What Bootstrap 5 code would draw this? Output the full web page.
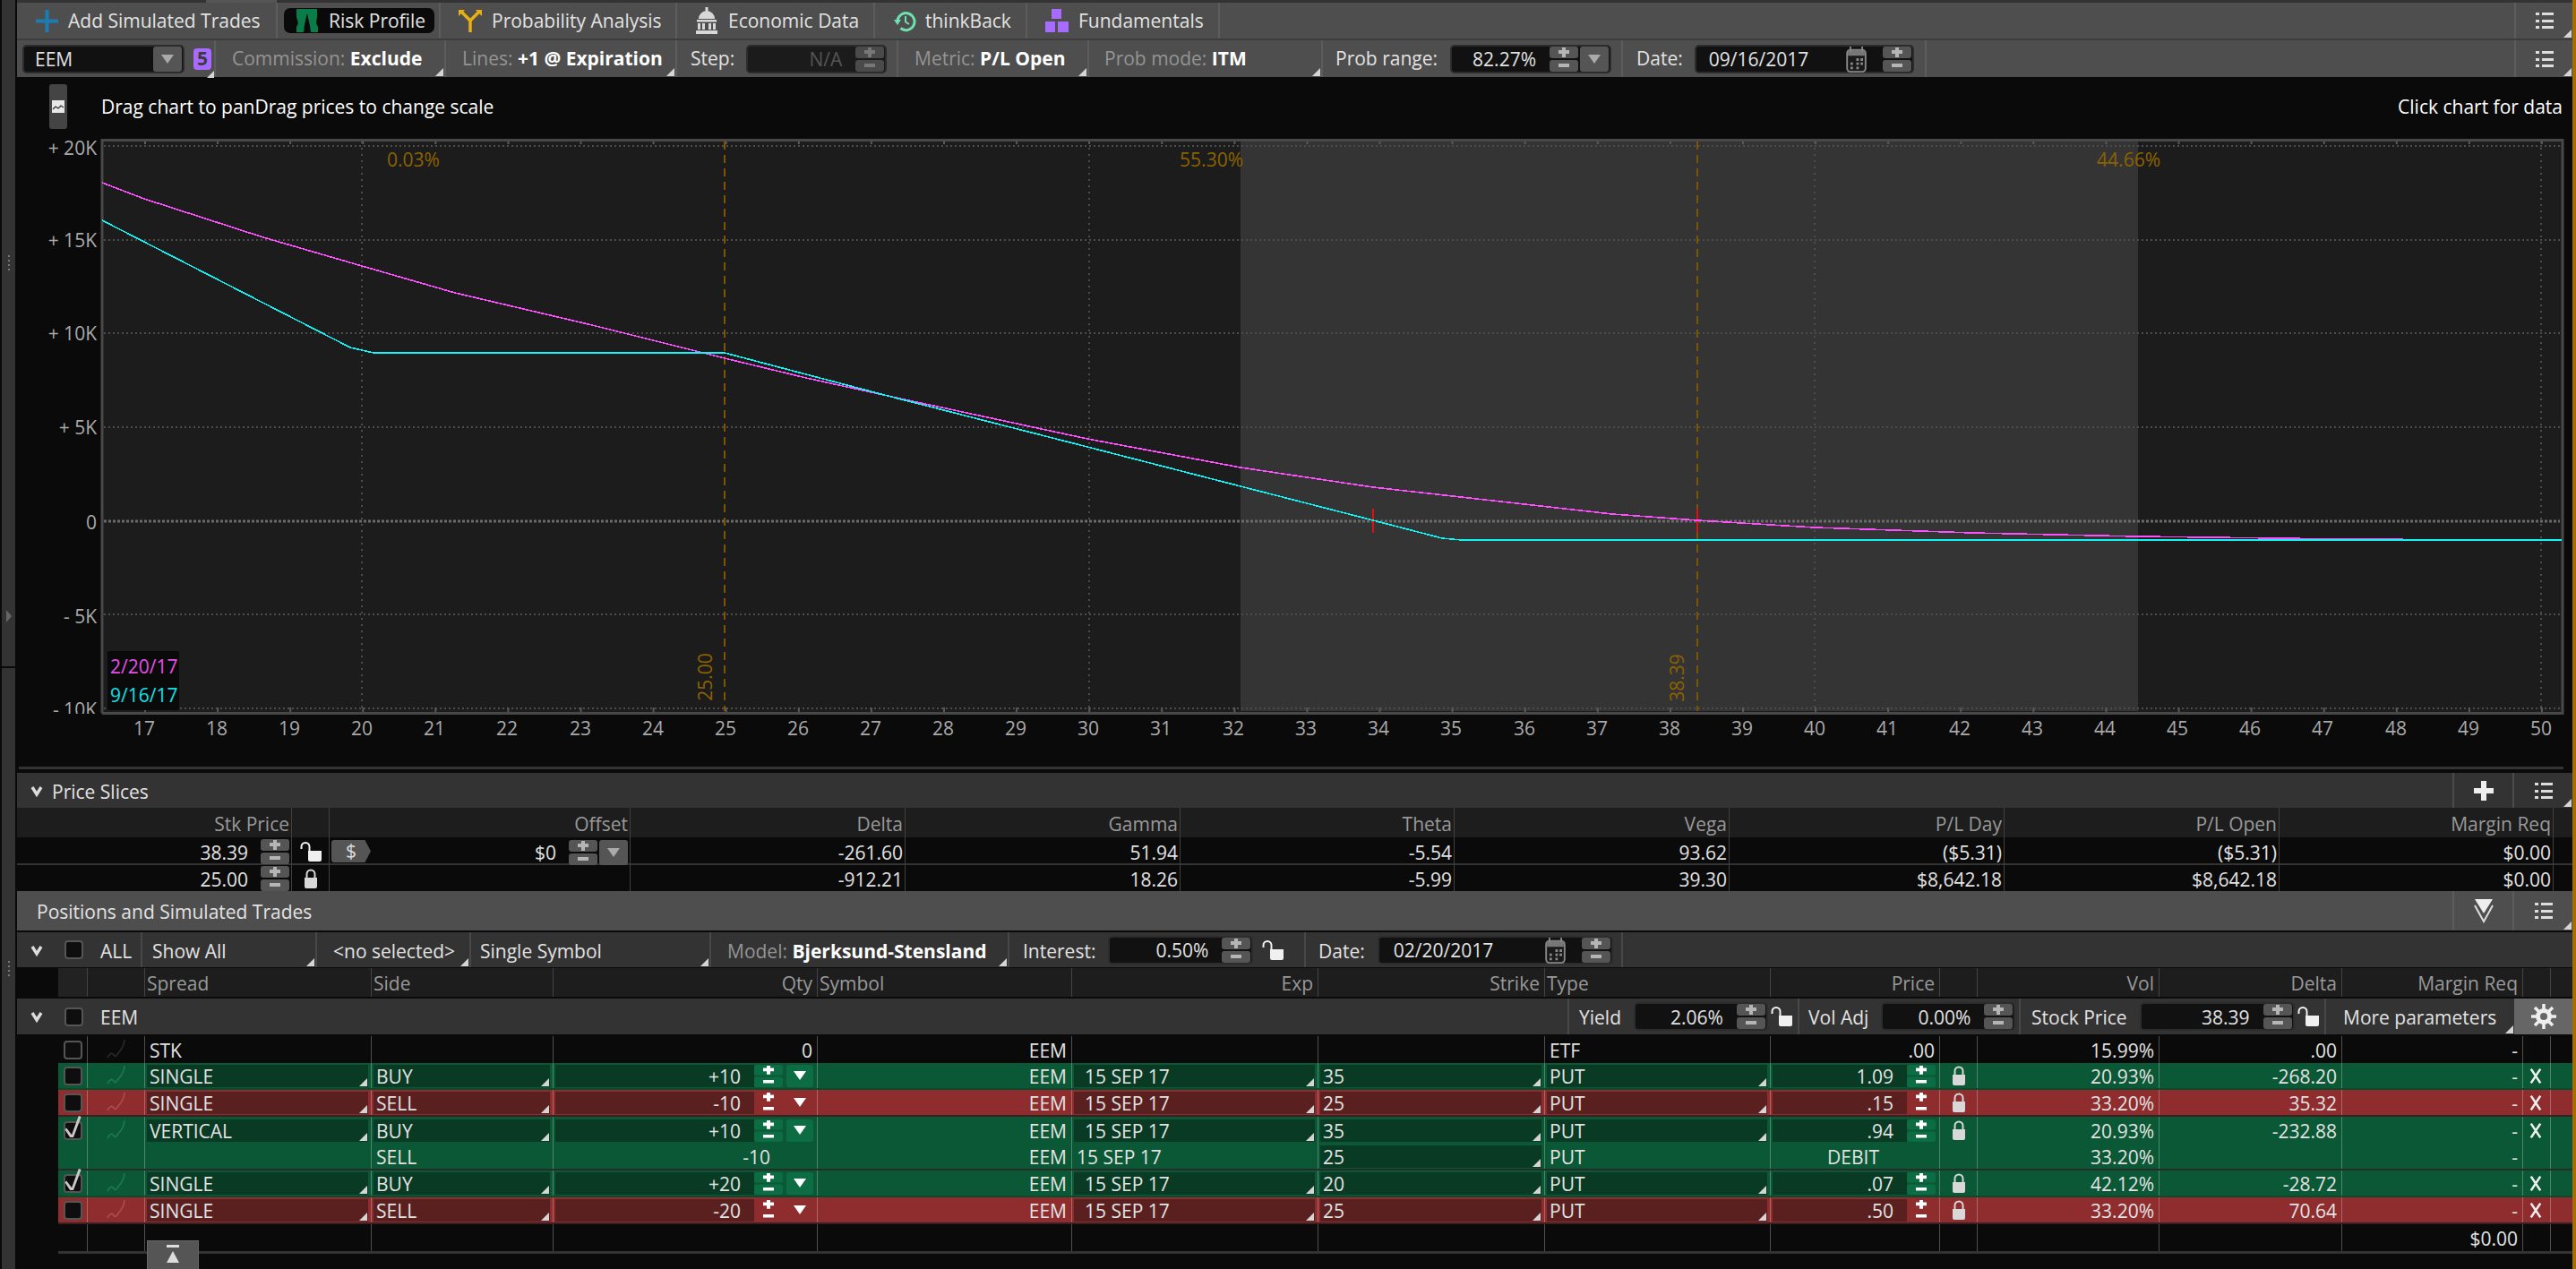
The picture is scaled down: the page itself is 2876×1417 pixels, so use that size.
<!DOCTYPE html>
<html lang="en">
<head>
<meta charset="utf-8">
<title>Risk Profile</title>
<link href="https://cdn.jsdelivr.net/npm/bootstrap@5.3.0/dist/css/bootstrap.min.css" rel="stylesheet">
<style>
html,body{width:2876px;height:1417px;overflow:hidden;background:#0a0a0a}
body{font-family:"Open Sans","Liberation Sans",sans-serif;font-size:21px;line-height:1;color:#e2e2e2;white-space:nowrap;--sb:#555;--sg:#b5b5b5;--dk:#111}
.rail{width:19px;background:#0a0a0a;padding:0 2px;flex:none}
.rail-a{height:744px;background:#333;display:flex;flex-direction:column;align-items:center;padding:285px 0 49px}
.rail-a .tri-r{margin-top:auto}
.rail-b{margin-top:2px;height:671px;background:#333;padding-top:327px}
.tri-r{width:0;height:0;border-style:solid;border-width:7px 0 7px 6px;border-color:transparent transparent transparent #666}
.rail-dots{width:2px;height:17px;margin:0 auto;background:repeating-linear-gradient(#777 0 2px,transparent 2px 5px)}
.edge{width:4px;background:#a66e00;flex:none}
.mainc{width:2853px;flex:none}
.strip{height:3px;background:#333}
.strip span{display:block;height:3px}
.strip .lit{width:79px;margin-left:211px;background:#555}
.bar{background:#4e4e4e;align-items:center}
.bar1{height:40px}
.bar2{height:41px}
.gap-line{height:2px;background:#3c3c3c}
.bc{height:100%;display:flex;align-items:center;border-right:2px solid #5c5c5c;position:relative;flex:none}
.cor::after{content:"";position:absolute;right:1px;bottom:1px;width:0;height:0;border-style:solid;border-width:0 0 9px 9px;border-color:transparent transparent #d5d5d5 transparent}
.t-add{width:291px;padding-left:21px;gap:11px}
.t-risk{width:182px;padding-left:7px}
.pill{width:168px;height:28px;background:#0a0a0a;border-radius:7px;display:flex;align-items:center;padding-left:13px;gap:12px}
.t-prob{width:264px;padding-left:20px;gap:11px}
.t-econ{width:221px;padding-left:19px;gap:10px}
.t-think{width:170px;padding-left:21px;gap:10px}
.t-fund{width:215px;padding-left:20px;gap:11px}
.bc-menu{width:65px;margin-left:auto;border-right:0;border-left:2px solid #5c5c5c;padding-left:22px}
.c-sym{width:222px;padding-left:6px;gap:10px}
.c-comm{width:257px;padding-left:18px}
.c-lines{width:258px;padding-left:18px}
.c-step{width:247px;padding-left:15px;gap:13px}
.c-metric{width:213px;padding-left:18px}
.c-pmode{width:261px;padding-left:17px}
.c-prange{width:335px;padding-left:14px;gap:14px}
.c-date{width:339px;padding-left:15px;gap:13px}
.dim{color:#949494}
.fld{display:flex;align-items:center;height:32px;background:var(--dk);border:2px solid #2c2c2c;border-radius:5px;padding-right:1px;gap:2px;position:relative;flex:none}
.fld-val{flex:1 1 auto;text-align:right;padding-right:13px;padding-top:2px}
.fld-l{flex:1 1 auto;text-align:left;padding-left:14px;padding-top:2px}
.w-sym{width:181px}
.w-sym .fld-l{padding-left:12px}
.w-step{width:157px}
.w-prange{width:180px}
.w-date{width:245px}
.w-int{width:162px}
.w-mdate{width:263px}
.w-yield{width:150px}
.w-stock{width:173px}
.na{color:#555;background:#1b1b1b;--sb:#4a4a4a;--sg:#777}
.ddb{width:32px;height:28px;background:#555;border-radius:3px;display:flex;align-items:center;justify-content:center;flex:none}
.ddb::before{content:"";width:0;height:0;border-style:solid;border-width:10px 7px 0 7px;border-color:#aaa transparent transparent transparent}
.ddb.tall{width:30px;height:25px;background:var(--sb)}
.ddb.tall::before{border-top-color:#fff}
.stp{width:32px;height:28px;flex:none;display:block}
.badge5{width:20px;height:24px;background:#a86bff;border-radius:4px;color:#3c3c3c;font-weight:700;display:flex;align-items:center;justify-content:center;position:relative;flex:none}
.badge5::after{content:"";position:absolute;right:-3px;bottom:-9px;border-style:solid;border-width:0 0 8px 8px;border-color:transparent transparent #d5d5d5 transparent}
.chartp{height:777px;background:#0a0a0a}
.chart-top{height:64px;align-items:center;padding:0 11px 0 36px}
.mini{width:20px;height:50px;background:#444;border-radius:3px;display:flex;align-items:center;justify-content:center;flex:none;margin-top:1px}
.chart-msg{margin-left:38px;color:#fff;padding-top:2px}
.chart-right{margin-left:auto;color:#fff;padding-top:2px}
.plot{display:block;width:2853px;height:713px}
.plot text{font-family:"Open Sans","Liberation Sans",sans-serif;font-size:21px}
.ax{fill:#a9a9a9}
.amb{fill:#8c6200}
.sect{background:#333;align-items:center;position:relative}
.sect>span{padding-top:3px}
.s-price{height:39px;padding-left:15px;gap:8px}
.s-pos{height:44px;background:#4e4e4e;padding-left:22px}
.s-btn{height:100%;width:67px;border-left:2px solid #4b4b4b;display:flex;align-items:center;justify-content:center;flex:none;position:relative}
.s-pos .s-btn{border-left-color:#5c5c5c}
.s-right{margin-left:auto;height:100%;display:flex}
.slices{display:grid;grid-template-columns:307px 42px 336px 307px 307px 306px 307px 307px 307px 306px 21px}
.sc{display:flex;align-items:center;justify-content:flex-end;padding:3px 2px 0 0;border-right:1px solid #404040;height:100%;gap:14px;min-width:0}
.sc svg,.sc .tag,.sc .ddb{margin-top:-3px}
.sc:last-child{border-right:0}
.sh{height:33px;background:#1d1d1d;color:#999}
.sr{height:31px;background:#0a0a0a;border-bottom:2px solid #333}
.sr.last{height:29px;border-bottom:0}
.tag{width:44px;height:25px;background:#555;clip-path:polygon(0 0,85% 0,100% 50%,85% 100%,0 100%);border-radius:3px;display:flex;align-items:center;justify-content:center;color:#ddd;margin-right:auto;margin-left:-1px;flex:none}
.sc.off{padding-left:3px}
.sc.off .wrapr{display:flex;gap:2px}
.sc.off .wrapr svg,.sc.off .wrapr .ddb{margin-top:0}
.lock{width:16px;height:22px;flex:none;display:block}
.lock-o{width:24px;height:22px;flex:none;display:block}
.filter{height:39px;background:#333;margin-top:2px;align-items:center}
.fc{height:100%;display:flex;align-items:center;border-right:2px solid #484848;position:relative;flex:none}
.fc>span:not(.chk),.gc>span,.g-all>span:not(.chk){padding-top:3px}
.f-all{width:140px;padding-left:15px;gap:19px}
.chev{width:14px;height:14px;flex:none;margin-right:2px}
.f-all .chev,.g-all .chev{margin-right:5px}
.chk{width:21px;height:21px;background:#0e0e0e;border:2px solid #555;border-radius:4px;display:block;flex:none;position:relative}
.chk svg{position:absolute;left:-1px;top:-10px;width:20px;height:27px;overflow:visible}
.f-show{width:195px;padding-left:11px}
.f-nos{width:172px;padding-left:18px}
.f-single{width:268px;padding-left:10px}
.f-model{width:333px;padding-left:18px}
.f-int{width:331px;padding-left:15px;gap:14px}
.f-date{width:354px;padding-left:14px;gap:14px}
.f-date .fld-l{padding-left:16px}
.lk-i{margin-left:-4px}
.lk-g{margin-left:-11px}
.bold{font-weight:700;color:#fff}
.pgrid{display:grid;grid-template-columns:33px 64px 253px 203px 295px 284px 275px 253px 252px 189px 42px 203px 204px 202px 31px 23px;margin-left:46px}
.c{display:flex;align-items:center;height:100%;border-right:1px solid rgba(255,255,255,.28);min-width:0;position:relative}
.c:last-child{border-right:0}
.e{justify-content:flex-end;padding:3px 5px 0 0}
.pl{padding:3px 0 0 5px}
.pe-qty{padding-right:52px}
.pe-deb{padding-right:67px}
.phead{height:32px;background:#1d1d1d;color:#999;margin-top:1px}
.phead .c{border-right-color:#444}
.phead .c:first-child{background:#222}
.phead .pl{padding-left:2px}
.grp{height:40px;background:#333;margin:2px 0;align-items:center}
.g-all{padding-left:15px;gap:19px;display:flex;align-items:center;height:100%}
.g-right{margin-left:auto;height:100%;display:flex;align-items:center}
.gc{height:100%;display:flex;align-items:center;border-left:2px solid #484848;flex:none;position:relative}
.g-y{width:257px;padding-left:11px;gap:14px}
.g-v{width:247px;padding-left:10px;gap:14px}
.g-s{width:341px;padding-left:12px;gap:14px}
.g-m{width:212px;padding-left:19px}
.gear{width:65px;background:#666;border-left:0;justify-content:center}
.prow{height:30px;border-bottom:2px solid #2a2a2a}
.prow .stp{height:25px}
.p-k{background:#0a0a0a;border-bottom:0;--sp:#2a2a2a}
.p-g{background:#0a5835;--dk:#083a24;--sb:#0c6c43;--sg:#fff;--sp:#1f7a52;border-bottom-color:#0a4a2e}
.p-r{background:#8e2c2e;--dk:#5a2020;--sb:#8e2c2e;--sg:#fff;--sp:#b04c4c;border-bottom-color:#3a2020}
.p-g.nob{border-bottom:0}
.p-g.sep{border-bottom-color:#2a2a2a}
.dk{background:var(--dk);height:25px;flex:1 1 auto;margin:0 3px 0 2px;display:flex;align-items:center;padding:3px 0 0 3px;position:relative;min-width:0}
.dk.num{justify-content:flex-end;padding-right:15px;margin-right:0}
.dk.exp{padding-left:12px}
.spark{width:24px;height:24px;display:block;color:var(--sp)}
.xm{width:14px;height:19px;display:block;margin-left:7px}
.ptot{height:30px;background:#0a0a0a}
.ptail{height:3px;margin-left:46px;background:#333}
.dock{position:absolute;left:164px;top:1385px;width:58px;height:32px;background:#555;border:1px solid #666;border-bottom:0;display:flex;align-items:center;justify-content:center}
.svgdefs{position:absolute;width:0;height:0}
</style>
</head>
<body class="d-flex">
<svg class="svgdefs" aria-hidden="true">
<defs>
<symbol id="stp" viewBox="0 0 32 28" preserveAspectRatio="none">
<rect width="32" height="13" rx="3" style="fill:var(--sb)"/>
<rect y="15" width="32" height="13" rx="3" style="fill:var(--sb)"/>
<path d="M14 1h4v3h4v4h-4v4h-4V8h-4V4h4zM10 19h12v4H10z" style="fill:var(--sg)"/>
</symbol>
<symbol id="menu" viewBox="0 0 20 20"><path d="M0 1h4v3H0zM7 1h13v3H7zM0 9h4v3H0zM7 9h13v3H7zM0 16h4v3H0zM7 16h13v3H7z" fill="#ddd"/></symbol>
<symbol id="lockc" viewBox="0 0 16 22"><path d="M1 10h14v10a2 2 0 0 1-2 2H3a2 2 0 0 1-2-2z" fill="#d8d8d8"/><path d="M3.500 10V6a4.500 4.500 0 0 1 9 0v4" fill="none" stroke="#d8d8d8" stroke-width="2"/></symbol>
<symbol id="locko" viewBox="0 0 24 22"><path d="M9 10h15v10a2 2 0 0 1-2 2H11a2 2 0 0 1-2-2z" fill="#f0f0f0"/><path d="M1.500 8V5.500a4.500 4.500 0 0 1 9 0V10" fill="none" stroke="#f0f0f0" stroke-width="2"/></symbol>
<symbol id="chev" viewBox="0 0 14 14"><path d="M2 3l5 8 5-8" fill="none" stroke="#ddd" stroke-width="3.400"/></symbol>
<symbol id="spark" viewBox="0 0 24 24"><path d="M2 21c3-5 5-6 7-3s3 1 5-2 6-5 7-15" fill="none" stroke="currentColor" stroke-width="1.600"/></symbol>
<symbol id="xm" viewBox="0 0 16 20"><path d="M2 1l12 18M14 1L2 19" fill="none" stroke="#eee" stroke-width="3"/></symbol>
<symbol id="cal" viewBox="0 0 24 32"><rect x="1" y="5" width="22" height="26" rx="4" fill="#1a1a1a" stroke="#888" stroke-width="2"/><path d="M2 5h20v7H2z" fill="#777"/><path d="M5 1v6M19 1v6" stroke="#888" stroke-width="2"/><path d="M12 15h3v3h-3zM17 15h3v3h-3zM5 20h3v3H5zM12 20h3v3h-3zM17 20h3v3h-3zM5 25h3v3H5zM12 25h3v3h-3z" fill="#888"/></symbol>
<symbol id="check" viewBox="0 0 20 28"><path d="M2 16l6 8L16 2l3 1-9 24H6L0 18z" fill="#c8c8c8"/></symbol>
</defs>
</svg>

<div class="rail">
  <div class="rail-a"><div class="rail-dots"></div><div class="tri-r"></div></div>
  <div class="rail-b"><div class="rail-dots"></div></div>
</div>

<div class="mainc">
  <div class="strip"><span class="lit"></span></div>

  <div class="bar bar1 d-flex">
    <div class="bc t-add">
      <svg width="25" height="25" viewBox="0 0 25 25" aria-hidden="true"><path d="M10.500 0h4v10.500H25v4H14.500V25h-4V14.500H0v-4h10.500z" fill="#1a7cb3"/></svg>
      <span>Add Simulated Trades</span>
    </div>
    <div class="bc t-risk"><div class="pill">
      <svg width="25" height="26" viewBox="0 0 25 26" aria-hidden="true"><path d="M1 0h23v9l-1 7 2 4v6h-8l-1-7-3-14-3 14-1 7H1v-6l2-4-2-7z" fill="#0a7c48"/><path d="M12.500 6l-3 15h1.500l1.500-8 1.500 8h1.500z" fill="#0a0a0a"/></svg>
      <span>Risk Profile</span></div>
    </div>
    <div class="bc t-prob">
      <svg width="26" height="26" viewBox="0 0 26 26" aria-hidden="true"><path d="M13 26V13L3 3M13 13L23 3" fill="none" stroke="#e8b012" stroke-width="3.500"/><path d="M0 8V1h7zM26 8V1h-7z" fill="#e8b012"/></svg>
      <span>Probability Analysis</span>
    </div>
    <div class="bc t-econ">
      <svg width="28" height="30" viewBox="0 0 28 30" aria-hidden="true"><path d="M12.500 0h3v5h-3zM5 13a9 9 0 0 1 18 0zM3 14h22v2.500H3zM4 18h3v7H4zM9 18h3v7H9zM16 18h3v7h-3zM21 18h3v7h-3zM2 26h24v4H2z" fill="#d8d8d8"/></svg>
      <span>Economic Data</span>
    </div>
    <div class="bc t-think">
      <svg width="25" height="25" viewBox="0 0 25 25" aria-hidden="true"><path d="M4 12.500A9.500 9.500 0 1 1 7.500 20.500" fill="none" stroke="#6fe0b0" stroke-width="3"/><path d="M0 11h8l-4 6z" fill="#6fe0b0"/><path d="M13 7v6.500l4 2.500" fill="none" stroke="#6fe0b0" stroke-width="2"/></svg>
      <span>thinkBack</span>
    </div>
    <div class="bc t-fund">
      <svg width="26" height="26" viewBox="0 0 26 26" aria-hidden="true"><path d="M7 0h11v11H7zM0 14h11v12H0zM14 14h12v12H14z" fill="#a86bff"/></svg>
      <span>Fundamentals</span>
    </div>
    <div class="bc bc-menu cor"><svg width="20" height="20" aria-hidden="true"><use href="#menu"/></svg></div>
  </div>
  <div class="gap-line"></div>
  <div class="bar bar2 d-flex">
    <div class="bc c-sym">
      <div class="fld w-sym"><span class="fld-l">EEM</span><span class="ddb"></span></div>
      <span class="badge5">5</span>
    </div>
    <div class="bc c-comm cor"><span><span class="dim">Commission: </span><span class="bold">Exclude</span></span></div>
    <div class="bc c-lines cor"><span><span class="dim">Lines: </span><span class="bold">+1 @ Expiration</span></span></div>
    <div class="bc c-step"><span>Step:</span>
      <div class="fld w-step na"><span class="fld-val">N/A</span><svg class="stp" aria-hidden="true"><use href="#stp"/></svg></div>
    </div>
    <div class="bc c-metric cor"><span><span class="dim">Metric: </span><span class="bold">P/L Open</span></span></div>
    <div class="bc c-pmode cor"><span><span class="dim">Prob mode: </span><span class="bold">ITM</span></span></div>
    <div class="bc c-prange"><span>Prob range:</span>
      <div class="fld w-prange"><span class="fld-val">82.27%</span><svg class="stp" aria-hidden="true"><use href="#stp"/></svg><span class="ddb"></span></div>
    </div>
    <div class="bc c-date"><span>Date:</span>
      <div class="fld w-date"><span class="fld-l">09/16/2017</span><svg width="23" height="30" class="me-3" aria-hidden="true"><use href="#cal"/></svg><svg class="stp" aria-hidden="true"><use href="#stp"/></svg></div>
    </div>
    <div class="bc bc-menu cor"><svg width="20" height="20" aria-hidden="true"><use href="#menu"/></svg></div>
  </div>

  <div class="chartp">
    <div class="chart-top d-flex">
      <div class="mini"><svg width="14" height="14" viewBox="0 0 14 14" aria-hidden="true"><rect width="14" height="14" fill="#e8e8e8"/><path d="M1 10l3-3 3 2 3-3 3 2" fill="none" stroke="#333" stroke-width="1.300"/></svg></div>
      <span class="chart-msg">Drag chart to panDrag prices to change scale</span>
      <span class="chart-right">Click chart for data</span>
    </div>
    <svg class="plot" viewBox="19 150 2853 713" role="img" aria-label="Risk profile chart">
      <defs><clipPath id="clipY"><rect x="19" y="150" width="94" height="647"/></clipPath></defs>
      <rect x="113" y="155" width="2747" height="642" fill="#1c1c1c"/>
      <rect x="1385" y="158" width="1002" height="636" fill="#343434"/>
      <g fill="none" stroke="#4c4c4c" stroke-width="2" stroke-dasharray="2 3">
        <path d="M116 163H2858M116 268H2858M116 372H2858M116 477H2858M116 686H2858M116 791H2858"/>
      </g>
      <path d="M404 158V794M1216 158V794M2026 158V794M2837 158V794" fill="none" stroke="#4c4c4c" stroke-width="2" stroke-dasharray="2 5"/>
      <path d="M116 582H2858" fill="none" stroke="#6a6a6a" stroke-width="3" stroke-dasharray="3 2"/>
      <path d="M161 158H2860M161 793H2860" fill="none" stroke="#5a5a5a" stroke-width="6" stroke-dasharray="2 79.090"/>
      <path d="M114 796.500V156.500H2861V796.500H114" fill="none" stroke="#484848" stroke-width="3"/>
      <path d="M809 158V794M1895 158V794" fill="none" stroke="#7a5600" stroke-width="2" stroke-dasharray="9 6"/>
      <path d="M1533 568V595M1895 568V595" fill="none" stroke="#e01010" stroke-width="2"/>
      <polyline fill="none" stroke="#ff50ff" stroke-width="1.600" shape-rendering="crispEdges" points="114,204 161,222 294,265 404,297 508,327 661,363 809,400 900,422 991,442 1214,490 1385,522 1533,544 1800,574 1895,581 2026,589 2202,595 2387,599 2623,602 2816,603"/>
      <polyline fill="none" stroke="#10f5f5" stroke-width="1.600" shape-rendering="crispEdges" points="114,246 391,388 417,394 809,394 900,418 991,442 1214,499 1385,543 1533,581 1610,601 1632,603 2860,603"/>
      <text class="amb" x="432" y="186">0.03%</text>
      <text class="amb" x="1388" y="186" text-anchor="end">55.30%</text>
      <text class="amb" x="2412" y="186" text-anchor="end">44.66%</text>
      <text class="amb" transform="translate(795 756) rotate(-90)" text-anchor="middle">25.00</text>
      <text class="amb" transform="translate(1880 757) rotate(-90)" text-anchor="middle">38.39</text>
      <rect x="120" y="727" width="80" height="66" rx="2" fill="#0a0a0a"/>
      <text x="123" y="752" fill="#e64fe6">2/20/17</text>
      <text x="123" y="784" fill="#12e0e8">9/16/17</text>
      <g class="ax" text-anchor="end" clip-path="url(#clipY)">
        <text x="108" y="173">+ 20K</text>
        <text x="108" y="276">+ 15K</text>
        <text x="108" y="380">+ 10K</text>
        <text x="108" y="485">+ 5K</text>
        <text x="108" y="591">0</text>
        <text x="108" y="696">- 5K</text>
        <text x="108" y="800">- 10K</text>
      </g>
      <g class="ax" text-anchor="middle">
        <text x="161" y="821">17</text><text x="242" y="821">18</text><text x="323" y="821">19</text><text x="404" y="821">20</text><text x="485" y="821">21</text><text x="566" y="821">22</text><text x="648" y="821">23</text><text x="729" y="821">24</text><text x="810" y="821">25</text><text x="891" y="821">26</text><text x="972" y="821">27</text><text x="1053" y="821">28</text><text x="1134" y="821">29</text><text x="1215" y="821">30</text><text x="1296" y="821">31</text><text x="1377" y="821">32</text><text x="1458" y="821">33</text><text x="1539" y="821">34</text><text x="1620" y="821">35</text><text x="1702" y="821">36</text><text x="1783" y="821">37</text><text x="1864" y="821">38</text><text x="1945" y="821">39</text><text x="2026" y="821">40</text><text x="2107" y="821">41</text><text x="2188" y="821">42</text><text x="2269" y="821">43</text><text x="2350" y="821">44</text><text x="2431" y="821">45</text><text x="2512" y="821">46</text><text x="2593" y="821">47</text><text x="2675" y="821">48</text><text x="2756" y="821">49</text><text x="2837" y="821">50</text>
      </g>
      <path d="M21 857.500H2862" stroke="#333" stroke-width="3"/>
    </svg>
  </div>

  <div class="sect s-price d-flex">
    <svg class="chev" aria-hidden="true"><use href="#chev"/></svg>
    <span>Price Slices</span>
    <div class="s-right">
      <div class="s-btn"><svg width="22" height="22" viewBox="0 0 22 22" aria-hidden="true"><path d="M8 0h6v8h8v6h-8v8H8v-8H0V8h8z" fill="#eee"/></svg></div>
      <div class="s-btn cor"><svg width="20" height="20" aria-hidden="true"><use href="#menu"/></svg></div>
    </div>
  </div>
  <div class="slices sh">
    <div class="sc">Stk Price</div><div class="sc"></div><div class="sc">Offset</div><div class="sc">Delta</div><div class="sc">Gamma</div><div class="sc">Theta</div><div class="sc">Vega</div><div class="sc">P/L Day</div><div class="sc">P/L Open</div><div class="sc">Margin Req</div><div class="sc"></div>
  </div>
  <div class="slices sr">
    <div class="sc"><span>38.39</span><svg class="stp" aria-hidden="true"><use href="#stp"/></svg></div>
    <div class="sc justify-content-center p-0"><svg class="lock-o m-0" aria-hidden="true"><use href="#locko"/></svg></div>
    <div class="sc off"><span class="tag">$</span><span>$0</span><span class="wrapr"><svg class="stp" aria-hidden="true"><use href="#stp"/></svg><span class="ddb"></span></span></div>
    <div class="sc">-261.60</div><div class="sc">51.94</div><div class="sc">-5.54</div><div class="sc">93.62</div><div class="sc">($5.31)</div><div class="sc">($5.31)</div><div class="sc">$0.00</div><div class="sc"></div>
  </div>
  <div class="slices sr last">
    <div class="sc"><span>25.00</span><svg class="stp" aria-hidden="true"><use href="#stp"/></svg></div>
    <div class="sc justify-content-center p-0"><svg class="lock m-0" aria-hidden="true"><use href="#lockc"/></svg></div>
    <div class="sc"></div>
    <div class="sc">-912.21</div><div class="sc">18.26</div><div class="sc">-5.99</div><div class="sc">39.30</div><div class="sc">$8,642.18</div><div class="sc">$8,642.18</div><div class="sc">$0.00</div><div class="sc"></div>
  </div>

  <div class="sect s-pos d-flex">
    <span>Positions and Simulated Trades</span>
    <div class="s-right">
      <div class="s-btn"><svg width="22" height="28" viewBox="0 0 22 28" aria-hidden="true"><path d="M1 1h20L11 17z" fill="#eee"/><path d="M1 8l10 18L21 8" fill="none" stroke="#ddd" stroke-width="2"/></svg></div>
      <div class="s-btn cor"><svg width="20" height="20" aria-hidden="true"><use href="#menu"/></svg></div>
    </div>
  </div>

  <div class="filter d-flex">
    <div class="fc f-all"><svg class="chev" aria-hidden="true"><use href="#chev"/></svg><span class="chk"></span><span>ALL</span></div>
    <div class="fc f-show cor"><span>Show All</span></div>
    <div class="fc f-nos cor"><span>&lt;no selected&gt;</span></div>
    <div class="fc f-single cor"><span>Single Symbol</span></div>
    <div class="fc f-model cor"><span><span class="dim">Model: </span><span class="bold">Bjerksund-Stensland</span></span></div>
    <div class="fc f-int"><span>Interest:</span>
      <div class="fld w-int"><span class="fld-val">0.50%</span><svg class="stp" aria-hidden="true"><use href="#stp"/></svg></div>
      <svg class="lock-o lk-i" aria-hidden="true"><use href="#locko"/></svg>
    </div>
    <div class="fc f-date"><span>Date:</span>
      <div class="fld w-mdate"><span class="fld-l">02/20/2017</span><svg width="23" height="30" class="me-3" aria-hidden="true"><use href="#cal"/></svg><svg class="stp" aria-hidden="true"><use href="#stp"/></svg></div>
    </div>
  </div>

  <div class="pgrid phead">
    <div class="c"></div><div class="c"></div><div class="c pl">Spread</div><div class="c pl">Side</div><div class="c e">Qty</div><div class="c pl">Symbol</div><div class="c e">Exp</div><div class="c e">Strike</div><div class="c pl">Type</div><div class="c e">Price</div><div class="c"></div><div class="c e">Vol</div><div class="c e">Delta</div><div class="c e">Margin Req</div><div class="c"></div><div class="c"></div>
  </div>

  <div class="grp d-flex">
    <div class="g-all"><svg class="chev" aria-hidden="true"><use href="#chev"/></svg><span class="chk"></span><span>EEM</span></div>
    <div class="g-right">
      <div class="gc g-y"><span>Yield</span>
        <div class="fld w-yield"><span class="fld-val">2.06%</span><svg class="stp" aria-hidden="true"><use href="#stp"/></svg></div>
        <svg class="lock-o lk-g" aria-hidden="true"><use href="#locko"/></svg></div>
      <div class="gc g-v"><span>Vol Adj</span>
        <div class="fld w-yield"><span class="fld-val">0.00%</span><svg class="stp" aria-hidden="true"><use href="#stp"/></svg></div></div>
      <div class="gc g-s"><span>Stock Price</span>
        <div class="fld w-stock"><span class="fld-val">38.39</span><svg class="stp" aria-hidden="true"><use href="#stp"/></svg></div>
        <svg class="lock-o lk-g" aria-hidden="true"><use href="#locko"/></svg></div>
      <div class="gc g-m cor"><span>More parameters</span></div>
      <div class="gc gear"><svg width="30" height="30" viewBox="0 0 30 30" aria-hidden="true"><path d="M15 1v28M1 15h28M5 5l20 20M25 5L5 25" stroke="#eee" stroke-width="3.500"/><circle cx="15" cy="15" r="9" fill="#eee"/><circle cx="15" cy="15" r="4" fill="#666"/></svg></div>
    </div>
  </div>

  <div class="pgrid prow p-k">
    <div class="c justify-content-center"><span class="chk"></span></div>
    <div class="c justify-content-center"><svg class="spark" aria-hidden="true"><use href="#spark"/></svg></div>
    <div class="c pl">STK</div><div class="c"></div><div class="c e">0</div><div class="c e">EEM</div><div class="c"></div><div class="c"></div><div class="c pl">ETF</div><div class="c e">.00</div><div class="c"></div><div class="c e">15.99%</div><div class="c e">.00</div><div class="c e">-</div><div class="c"></div><div class="c"></div>
  </div>

  <div class="pgrid prow p-g">
    <div class="c justify-content-center"><span class="chk"></span></div>
    <div class="c justify-content-center"><svg class="spark" aria-hidden="true"><use href="#spark"/></svg></div>
    <div class="c"><span class="dk cor">SINGLE</span></div><div class="c"><span class="dk cor">BUY</span></div>
    <div class="c"><span class="dk num">+10</span><svg class="stp" aria-hidden="true"><use href="#stp"/></svg><span class="ddb tall ms-1 me-1"></span></div>
    <div class="c e">EEM</div><div class="c"><span class="dk exp cor">15 SEP 17</span></div><div class="c"><span class="dk cor">35</span></div><div class="c"><span class="dk cor">PUT</span></div>
    <div class="c"><span class="dk num">1.09</span><svg class="stp me-1" aria-hidden="true"><use href="#stp"/></svg></div>
    <div class="c justify-content-center"><svg class="lock" aria-hidden="true"><use href="#lockc"/></svg></div>
    <div class="c e">20.93%</div><div class="c e">-268.20</div><div class="c e">-</div><div class="c"><svg class="xm" aria-hidden="true"><use href="#xm"/></svg></div><div class="c"></div>
  </div>

  <div class="pgrid prow p-r">
    <div class="c justify-content-center"><span class="chk"></span></div>
    <div class="c justify-content-center"><svg class="spark" aria-hidden="true"><use href="#spark"/></svg></div>
    <div class="c"><span class="dk cor">SINGLE</span></div><div class="c"><span class="dk cor">SELL</span></div>
    <div class="c"><span class="dk num">-10</span><svg class="stp" aria-hidden="true"><use href="#stp"/></svg><span class="ddb tall ms-1 me-1"></span></div>
    <div class="c e">EEM</div><div class="c"><span class="dk exp cor">15 SEP 17</span></div><div class="c"><span class="dk cor">25</span></div><div class="c"><span class="dk cor">PUT</span></div>
    <div class="c"><span class="dk num">.15</span><svg class="stp me-1" aria-hidden="true"><use href="#stp"/></svg></div>
    <div class="c justify-content-center"><svg class="lock" aria-hidden="true"><use href="#lockc"/></svg></div>
    <div class="c e">33.20%</div><div class="c e">35.32</div><div class="c e">-</div><div class="c"><svg class="xm" aria-hidden="true"><use href="#xm"/></svg></div><div class="c"></div>
  </div>

  <div class="pgrid prow p-g nob">
    <div class="c justify-content-center"><span class="chk"><svg aria-hidden="true"><use href="#check"/></svg></span></div>
    <div class="c justify-content-center"><svg class="spark" aria-hidden="true"><use href="#spark"/></svg></div>
    <div class="c"><span class="dk cor">VERTICAL</span></div><div class="c"><span class="dk cor">BUY</span></div>
    <div class="c"><span class="dk num">+10</span><svg class="stp" aria-hidden="true"><use href="#stp"/></svg><span class="ddb tall ms-1 me-1"></span></div>
    <div class="c e">EEM</div><div class="c"><span class="dk exp cor">15 SEP 17</span></div><div class="c"><span class="dk cor">35</span></div><div class="c"><span class="dk cor">PUT</span></div>
    <div class="c"><span class="dk num">.94</span><svg class="stp me-1" aria-hidden="true"><use href="#stp"/></svg></div>
    <div class="c justify-content-center"><svg class="lock" aria-hidden="true"><use href="#lockc"/></svg></div>
    <div class="c e">20.93%</div><div class="c e">-232.88</div><div class="c e">-</div><div class="c"><svg class="xm" aria-hidden="true"><use href="#xm"/></svg></div><div class="c"></div>
  </div>
  <div class="pgrid prow p-g sep">
    <div class="c"></div><div class="c"></div><div class="c"></div><div class="c pl">SELL</div><div class="c e pe-qty">-10</div><div class="c e">EEM</div><div class="c pl">15 SEP 17</div><div class="c"><span class="dk cor">25</span></div><div class="c pl">PUT</div><div class="c e pe-deb">DEBIT</div><div class="c"></div><div class="c e">33.20%</div><div class="c"></div><div class="c e">-</div><div class="c"></div><div class="c"></div>
  </div>

  <div class="pgrid prow p-g">
    <div class="c justify-content-center"><span class="chk"><svg aria-hidden="true"><use href="#check"/></svg></span></div>
    <div class="c justify-content-center"><svg class="spark" aria-hidden="true"><use href="#spark"/></svg></div>
    <div class="c"><span class="dk cor">SINGLE</span></div><div class="c"><span class="dk cor">BUY</span></div>
    <div class="c"><span class="dk num">+20</span><svg class="stp" aria-hidden="true"><use href="#stp"/></svg><span class="ddb tall ms-1 me-1"></span></div>
    <div class="c e">EEM</div><div class="c"><span class="dk exp cor">15 SEP 17</span></div><div class="c"><span class="dk cor">20</span></div><div class="c"><span class="dk cor">PUT</span></div>
    <div class="c"><span class="dk num">.07</span><svg class="stp me-1" aria-hidden="true"><use href="#stp"/></svg></div>
    <div class="c justify-content-center"><svg class="lock" aria-hidden="true"><use href="#lockc"/></svg></div>
    <div class="c e">42.12%</div><div class="c e">-28.72</div><div class="c e">-</div><div class="c"><svg class="xm" aria-hidden="true"><use href="#xm"/></svg></div><div class="c"></div>
  </div>

  <div class="pgrid prow p-r">
    <div class="c justify-content-center"><span class="chk"></span></div>
    <div class="c justify-content-center"><svg class="spark" aria-hidden="true"><use href="#spark"/></svg></div>
    <div class="c"><span class="dk cor">SINGLE</span></div><div class="c"><span class="dk cor">SELL</span></div>
    <div class="c"><span class="dk num">-20</span><svg class="stp" aria-hidden="true"><use href="#stp"/></svg><span class="ddb tall ms-1 me-1"></span></div>
    <div class="c e">EEM</div><div class="c"><span class="dk exp cor">15 SEP 17</span></div><div class="c"><span class="dk cor">25</span></div><div class="c"><span class="dk cor">PUT</span></div>
    <div class="c"><span class="dk num">.50</span><svg class="stp me-1" aria-hidden="true"><use href="#stp"/></svg></div>
    <div class="c justify-content-center"><svg class="lock" aria-hidden="true"><use href="#lockc"/></svg></div>
    <div class="c e">33.20%</div><div class="c e">70.64</div><div class="c e">-</div><div class="c"><svg class="xm" aria-hidden="true"><use href="#xm"/></svg></div><div class="c"></div>
  </div>

  <div class="pgrid ptot">
    <div class="c"></div><div class="c"></div><div class="c"></div><div class="c"></div><div class="c"></div><div class="c"></div><div class="c"></div><div class="c"></div><div class="c"></div><div class="c"></div><div class="c"></div><div class="c"></div><div class="c"></div><div class="c e">$0.00</div><div class="c"></div><div class="c"></div>
  </div>
  <div class="ptail"></div>
</div>
<div class="edge"></div>
<div class="dock"><svg width="18" height="24" viewBox="0 0 18 24" aria-hidden="true"><path d="M2 0h14v3H2zM9 7l7 13H2z" fill="#ddd"/></svg></div>
</body>
</html>
